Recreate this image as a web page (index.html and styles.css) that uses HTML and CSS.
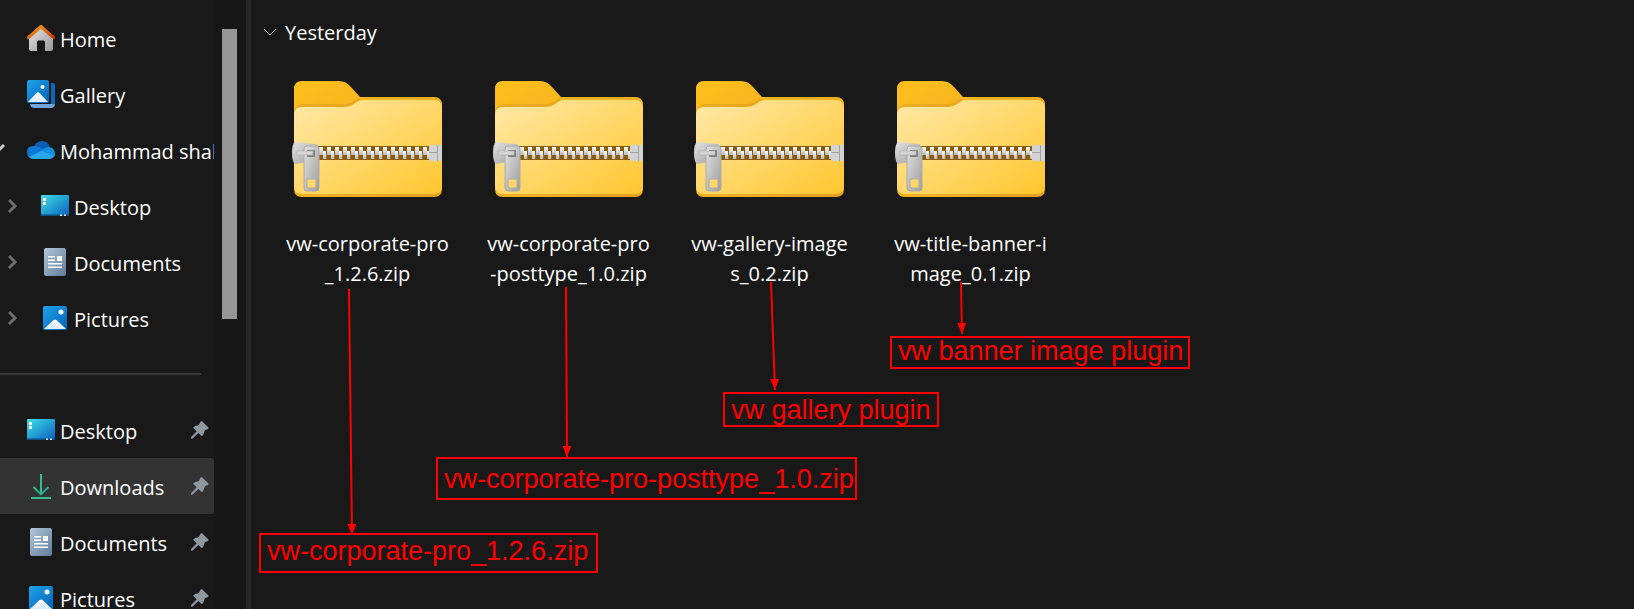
FILE: index.html
```html
<!DOCTYPE html>
<html lang="en">
<head>
  <meta charset="UTF-8">
  <title>Downloads</title>
  <meta name="viewport" content="width=device-width, initial-scale=1.0">
  <link rel="stylesheet" href="styles.css">
</head>
<body>

<!-- shared icons -->
<svg class="sprite" aria-hidden="true">
  <defs>
    <linearGradient id="roof" x1="0" y1="0" x2="1" y2="1"><stop offset="0" stop-color="#f9a01b"/><stop offset="1" stop-color="#c83c05"/></linearGradient>
    <linearGradient id="wall" x1="0" y1="0" x2="1" y2="1"><stop offset="0" stop-color="#e6e6e6"/><stop offset="1" stop-color="#999"/></linearGradient>
    <linearGradient id="blue" x1="0" y1="0" x2="1" y2="1"><stop offset="0" stop-color="#1fa4e8"/><stop offset="1" stop-color="#0560b8"/></linearGradient>
    <linearGradient id="snow" x1="0" y1="0" x2="0" y2="1"><stop offset="0" stop-color="#fff"/><stop offset="1" stop-color="#d8ebfb"/></linearGradient>
    <linearGradient id="desk" x1="0" y1="0" x2="1" y2="1"><stop offset="0" stop-color="#3fe0e6"/><stop offset="1" stop-color="#0a5fbe"/></linearGradient>
    <linearGradient id="paper" x1="0" y1="0" x2="1" y2="1"><stop offset="0" stop-color="#b4c6da"/><stop offset="1" stop-color="#5f7d9c"/></linearGradient>
    <linearGradient id="green" x1="0" y1="0" x2="1" y2="1"><stop offset="0" stop-color="#3cc58a"/><stop offset="1" stop-color="#149c8c"/></linearGradient>
    <linearGradient id="back" x1="0" y1="0" x2="1" y2="1"><stop offset="0" stop-color="#ffc01d"/><stop offset="1" stop-color="#e5a021"/></linearGradient>
    <linearGradient id="front" x1="0" y1="0" x2="1" y2="1"><stop offset="0" stop-color="#ffe9a8"/><stop offset="1" stop-color="#ffc62e"/></linearGradient>
    <linearGradient id="metal" x1="0" y1="0" x2="1" y2="1"><stop offset="0" stop-color="#e2e2e2"/><stop offset="1" stop-color="#9c9c9c"/></linearGradient>
    <linearGradient id="tooth" x1="0" y1="0" x2="0" y2="1"><stop offset="0" stop-color="#fff"/><stop offset="1" stop-color="#b8b8b8"/></linearGradient>
    <pattern id="teeth" x="28" y="68" width="8" height="14" patternUnits="userSpaceOnUse">
      <rect width="8" height="14" fill="#8a5e08"/>
      <rect x="1" y="1" width="4" height="8" fill="url(#tooth)"/>
      <rect x="5" y="5" width="3" height="8" fill="url(#tooth)"/>
      <rect x="0" y="9" width="1" height="4" fill="#a9782a"/>
    </pattern>
  </defs>

  <symbol id="i-home" viewBox="0 0 28 28">
    <path fill="url(#wall)" d="M2 12 14 2l12 10v12.500q0 2.500-2.500 2.500H18v-9q0-1.500-1.500-1.500h-5q-1.500 0-1.500 1.500v9H4.500Q2 27 2 24.500z"/>
    <path fill="none" stroke="url(#roof)" stroke-width="3" stroke-linecap="round" stroke-linejoin="round" d="M1.500 13.500 14 2.500l12.500 11"/>
  </symbol>
  <symbol id="i-gallery" viewBox="0 0 28 28">
    <path fill="#0a67bd" d="M24 3h2q2 0 2 2v19q0 2-2 2h-2z"/>
    <path fill="#6fa5da" d="M3 24h23q2 0 2 1-1 3-3 3H7q-3 0-4-4z"/>
    <path fill="#191919" d="M0 0h23v24H0z"/>
    <rect width="22" height="23" rx="2" fill="url(#blue)"/>
    <path fill="url(#snow)" d="M1 22 9.500 13q1.500-1.500 3 0L21 22z"/>
    <circle cx="15.500" cy="7" r="2" fill="#fff"/>
  </symbol>
  <symbol id="i-cloud" viewBox="0 0 28 28">
    <path fill="#0a5fb4" d="M6 12q3-7 9-7 6 0 8 6l-6 5z"/>
    <path fill="#0f78d4" d="M7 23q-7 0-7-7t8-6q4 0 7 3l4 3-9 7z"/>
    <path fill="#1690e0" d="M15 14q3-3 7-3 6 1 6 7 0 2-1 3z"/>
    <path fill="#28a8ea" d="M2 21 15 14.500 27 20q-1 3-5 3H7q-3 0-5-2z"/>
  </symbol>
  <symbol id="i-desktop" viewBox="0 0 28 28">
    <rect y="3" width="28" height="21" rx="1" fill="url(#desk)"/>
    <path fill="#0b4f80" d="M0 22.500h28v.500q0 1-1 1H1q-1 0-1-1z"/>
    <path fill="#fff" d="M2 6h3v3H2zM2 10h3v3H2zM19 22.500h2V24h-2zM23 22.500h2V24h-2z"/>
  </symbol>
  <symbol id="i-document" viewBox="0 0 28 28">
    <rect x="3" width="22" height="28" rx="2" fill="url(#paper)"/>
    <path fill="#fff" d="M7 8h7v1.500H7zM7 11.500h7V13H7zM16 8h5v5h-5zM7 15h14v1.500H7zM7 18.500h14V20H7z"/>
  </symbol>
  <symbol id="i-picture" viewBox="0 0 28 28">
    <rect x="2" y="2" width="24" height="24" rx="2" fill="url(#blue)"/>
    <path fill="url(#snow)" d="M3 25 12.500 16q1.500-1 3 0L25 25z"/>
    <circle cx="20" cy="8" r="2.500" fill="#fff"/>
  </symbol>
  <symbol id="i-download" viewBox="0 0 28 28">
    <path fill="none" stroke="url(#green)" stroke-width="1.800" d="M6.500 15 14 22.500 21.500 15"/>
    <path fill="#35bb8c" d="M13 2h2v20h-2zM4 25h20v2H4z"/>
  </symbol>
  <symbol id="i-pin" viewBox="0 0 54 54">
    <path fill="#8f989f" d="M33 1 53 20q0 4-4 5-5 0-9 6-1 11-7 15L22 36 4 53H0v-4L17 31 6 20q5-6 16-7 4-3 6-10 2-3 5-2z"/>
  </symbol>
  <symbol id="i-zip" viewBox="0 0 156 122">
    <path fill="url(#back)" d="M4 11q0-8 8-8h37q7 0 12 6l9 10h74q8 0 8 8v84q0 8-8 8H12q-8 0-8-8z"/>
    <path fill="#d79a1d" d="M4 36q0-9 8-10h43q7 0 13-6l2 2-6 8H14z" opacity=".5"/>
    <path fill="url(#front)" d="M4 37q0-8 8-8h43q5 0 9-3 5-4 9-4h71q8 0 8 8v78q0 8-8 8H12q-8 0-8-8z"/>
    <rect x="28" y="68" width="112" height="14" fill="url(#teeth)"/>
    <path fill="#d2d2d2" d="M139 67h13v16h-13z"/>
    <path fill="#a2a2a2" d="M139 74h9v1h-9zM147 67h1v16h-1z"/>
    <path fill="url(#metal)" d="M5 64 25 66q3 0 3 4v12L5 86q-3-2-3-11t3-11z"/>
    <path fill="url(#metal)" stroke="#aaa" fill-rule="evenodd" d="M17 68h9q3 0 3 3v39q0 3-3 3h-9q-3 0-3-3V71q0-3 3-3zm0 33v9h9v-9z"/>
    <path fill="#828282" d="M17 72h8v7h-8z"/>
    <path fill="#d4d4d4" stroke="#aaa" stroke-width=".500" d="M7 73h16v4H7z"/>
  </symbol>
</svg>

<div class="explorer">
  <nav class="sidebar">
    <a class="nav-item" href="#"><svg class="icon"><use href="#i-home"/></svg><span>Home</span></a>
    <a class="nav-item" href="#"><svg class="icon"><use href="#i-gallery"/></svg><span>Gallery</span></a>
    <a class="nav-item" href="#">
      <svg class="expander open" viewBox="0 0 10 14"><path d="M-3 5 1 9l7-7"/></svg>
      <svg class="icon"><use href="#i-cloud"/></svg><span>Mohammad shah</span>
    </a>
    <a class="nav-item nested" href="#">
      <svg class="expander" viewBox="0 0 10 14"><path d="M1 1l6 6-6 6"/></svg>
      <svg class="icon"><use href="#i-desktop"/></svg><span>Desktop</span>
    </a>
    <a class="nav-item nested" href="#">
      <svg class="expander" viewBox="0 0 10 14"><path d="M1 1l6 6-6 6"/></svg>
      <svg class="icon"><use href="#i-document"/></svg><span>Documents</span>
    </a>
    <a class="nav-item nested" href="#">
      <svg class="expander" viewBox="0 0 10 14"><path d="M1 1l6 6-6 6"/></svg>
      <svg class="icon"><use href="#i-picture"/></svg><span>Pictures</span>
    </a>
    <hr class="divider">
    <a class="nav-item" href="#"><svg class="icon"><use href="#i-desktop"/></svg><span>Desktop</span><svg class="pin"><use href="#i-pin"/></svg></a>
    <a class="nav-item active" href="#"><svg class="icon"><use href="#i-download"/></svg><span>Downloads</span><svg class="pin"><use href="#i-pin"/></svg></a>
    <a class="nav-item" href="#"><svg class="icon"><use href="#i-document"/></svg><span>Documents</span><svg class="pin"><use href="#i-pin"/></svg></a>
    <a class="nav-item" href="#"><svg class="icon"><use href="#i-picture"/></svg><span>Pictures</span><svg class="pin"><use href="#i-pin"/></svg></a>
  </nav>
  <div class="scrollbar"><div class="thumb"></div></div>

  <main class="content">
    <h1 class="group-title">
      <svg class="group-arrow" viewBox="0 0 14 8"><path d="M1 1l6 6 6-6"/></svg>Yesterday
    </h1>
    <div class="files">
      <div class="file"><svg class="folder"><use href="#i-zip"/></svg><span>vw-corporate-pro<br>_1.2.6.zip</span></div>
      <div class="file"><svg class="folder"><use href="#i-zip"/></svg><span>vw-corporate-pro<br>-posttype_1.0.zip</span></div>
      <div class="file"><svg class="folder"><use href="#i-zip"/></svg><span>vw-gallery-image<br>s_0.2.zip</span></div>
      <div class="file"><svg class="folder"><use href="#i-zip"/></svg><span>vw-title-banner-i<br>mage_0.1.zip</span></div>
    </div>

    <!-- notes drawn over the file list -->
    <svg class="arrows" aria-hidden="true">
      <defs>
        <marker id="head" markerUnits="userSpaceOnUse" markerWidth="12" markerHeight="10" refX="11" refY="5" orient="auto">
          <path fill="#f00" d="M0 0.500 11 5 0 9.500z"/>
        </marker>
      </defs>
      <path d="M98 289 101 535"/>
      <path d="M315 287 316 457"/>
      <path d="M520 282 524 390"/>
      <path d="M710 282 711 334"/>
    </svg>
    <div class="note note-banner">vw banner image plugin</div>
    <div class="note note-gallery">vw gallery plugin</div>
    <div class="note note-posttype">vw-corporate-pro-posttype_1.0.zip</div>
    <div class="note note-theme">vw-corporate-pro_1.2.6.zip</div>
  </main>
</div>

</body>
</html>
```
FILE: styles.css
```css
* { box-sizing: border-box; }
body {
  margin: 0;
  background: #191919;
  color: #fff;
  font-family: "Open Sans", "Noto Sans", sans-serif;
  font-size: 20px;
}
.sprite {
  position: absolute;
  width: 0;
  height: 0;
}
.explorer {
  display: flex;
  height: 100vh;
  overflow: hidden;
}

/* sidebar */
.sidebar {
  flex: 0 0 214px;
  padding-top: 10px;
  overflow: hidden;
}
.nav-item {
  position: relative;
  display: flex;
  align-items: center;
  gap: 5px;
  height: 56px;
  padding: 0 5px 0 27px;
  color: #fff;
  text-decoration: none;
  white-space: nowrap;
}
.nav-item span { padding-top: 2px; }
.nav-item.nested { padding-left: 41px; }
.nav-item.active {
  background: #333;
  border-radius: 0 3px 3px 0;
}
.icon {
  flex: none;
  width: 28px;
  height: 28px;
}
.pin {
  flex: none;
  width: 18px;
  height: 18px;
  margin-left: auto;
}
.expander {
  position: absolute;
  left: 8px;
  width: 10px;
  height: 14px;
  fill: none;
  stroke: #6e6e6e;
  stroke-width: 3;
}
.expander.open {
  left: -4px;
  stroke: #ccc;
}
.divider {
  height: 2px;
  margin: 27px 13px 27px 0;
  border: 0;
  background: #383838;
}
.scrollbar {
  flex: 0 0 37px;
  padding: 29px 0 0 8px;
  background: #171717;
  border-right: 5px solid #272727;
}
.thumb {
  width: 15px;
  height: 290px;
  background: #969696;
}

/* file list */
.content {
  position: relative;
  flex: 1;
  padding: 17px 16px;
}
.group-title {
  display: flex;
  align-items: center;
  gap: 8px;
  height: 30px;
  margin: 0 0 31px -4px;
  font-size: 20px;
  font-weight: 400;
}
.group-arrow {
  width: 14px;
  height: 8px;
  fill: none;
  stroke: #bbb;
}
.files {
  display: flex;
  flex-wrap: wrap;
}
.file {
  display: flex;
  flex-direction: column;
  align-items: center;
  gap: 29px;
  width: 201px;
  line-height: 30px;
  text-align: center;
}
.folder {
  width: 156px;
  height: 122px;
}

/* notes */
.arrows {
  position: absolute;
  top: 0;
  left: 0;
  width: 100%;
  height: 100%;
  fill: none;
  stroke: #f00;
  stroke-width: 2;
}
.arrows > path { marker-end: url(#head); }
.arrows marker path { stroke: none; }
.note {
  position: absolute;
  padding: 0 6px;
  border: 2px solid #f00;
  color: #f00;
  font-family: "Liberation Sans", Arial, sans-serif;
  font-size: 27px;
  line-height: 26px;
  white-space: nowrap;
}
.note-banner {
  top: 336px;
  left: 639px;
  width: 300px;
  height: 33px;
}
.note-gallery {
  top: 392px;
  left: 472px;
  width: 216px;
  height: 35px;
  line-height: 32px;
}
.note-posttype {
  top: 457px;
  left: 185px;
  width: 421px;
  height: 43px;
  line-height: 40px;
}
.note-theme {
  top: 533px;
  left: 8px;
  width: 339px;
  height: 40px;
  line-height: 32px;
}
```
